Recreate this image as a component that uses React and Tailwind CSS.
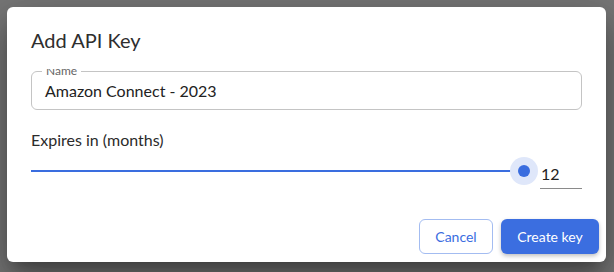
import React from "react";

const App = () => {
  return (
    <div
      className="w-[614px] h-[272px] bg-[#777777] pt-[7px] pl-[7px] overflow-hidden"
      style={{ fontFamily: "Lato, 'Noto Sans', sans-serif" }}
    >
      {/* Dialog */}
      <div className="w-[599px] h-[255px] bg-white rounded-[6px] flex flex-col shadow-[0_11px_15px_-7px_rgba(0,0,0,0.3),0_24px_38px_3px_rgba(0,0,0,0.2),0_9px_46px_8px_rgba(0,0,0,0.16)]">
        <div className="px-6 pt-[21px]">
          <h2 className="text-[20px] leading-[24px] text-[#2e2e2e]">Add API Key</h2>

          {/* Name field */}
          <div className="relative mt-[19px] h-[39px] border border-[#c4c4c4] rounded-[6px] flex items-center px-[13px]">
            <div className="absolute left-[10px] top-[-3px] h-[8px] px-[4px] bg-white overflow-hidden">
              <span className="block mt-[-4px] text-[12px] leading-[12px] text-[#666]">Name</span>
            </div>
            <span className="text-[16px] leading-[24px] text-[#222]">Amazon Connect - 2023</span>
          </div>

          <p className="mt-[18px] text-[16px] leading-[24px] text-[#2b2b2b]">Expires in (months)</p>

          {/* Slider row */}
          <div className="mt-[5px] flex items-start">
            <div className="relative h-[28px] w-[494px]">
              <div className="absolute left-0 right-0 top-[13px] h-[2px] bg-[#3a6ddf]" />
              <div className="absolute right-[-14px] top-0 w-[28px] h-[28px] rounded-full bg-[#dfe7fa] flex items-center justify-center">
                <div className="w-[12px] h-[12px] rounded-full bg-[#3a6ddf]" />
              </div>
            </div>
            <div className="ml-[16px] mt-[5px] w-[42px] h-[27px] border-b border-[#8a8a8a]">
              <span className="block pl-[1px] text-[16px] leading-[24px] text-[#222]">12</span>
            </div>
          </div>
        </div>

        {/* Actions */}
        <div className="mt-auto flex justify-end gap-2 pr-[7px] pb-2">
          <button className="h-[35px] w-[74px] rounded-[6px] border border-[#a3bcf1] bg-white text-[14px] text-[#3a6ddf]">
            Cancel
          </button>
          <button className="h-[35px] w-[98px] rounded-[6px] bg-[#3b6ee0] text-[14px] text-white shadow-[0_2px_4px_rgba(0,0,0,0.25)]">
            Create key
          </button>
        </div>
      </div>
    </div>
  );
};

export default App;
